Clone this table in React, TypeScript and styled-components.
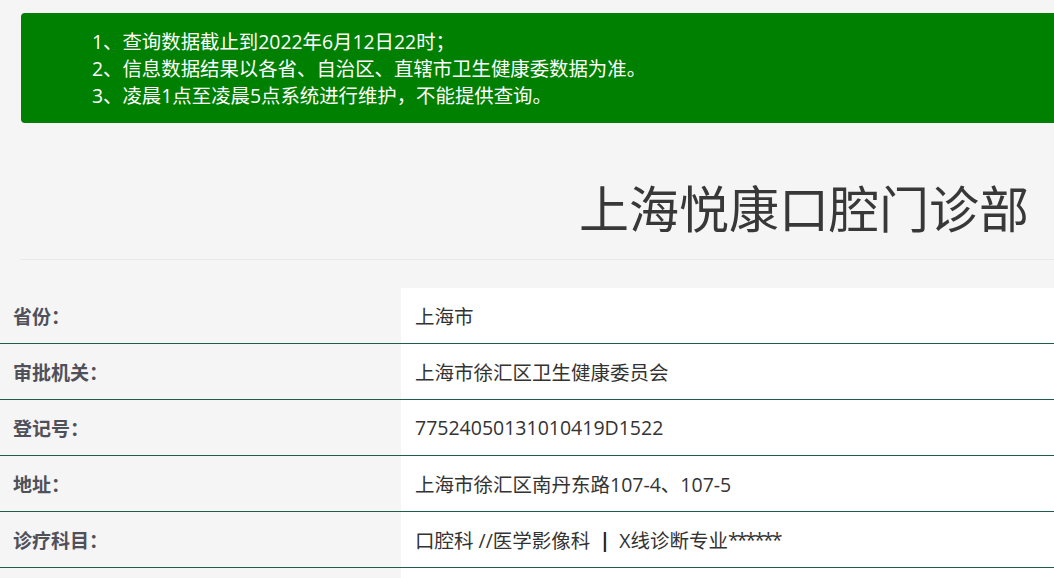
import React from "react";
import styled, { createGlobalStyle } from "styled-components";

const Global = createGlobalStyle`
  html, body {
    margin: 0;
    padding: 0;
    background: #f5f5f5;
    overflow: hidden;
  }
  body {
    font-family: "Open Sans", "Noto Sans CJK SC", sans-serif;
  }
`;

const Page = styled.div`
  background: #f5f5f5;
  padding-top: 13px;
  min-height: 578px;
`;

const Notice = styled.div`
  margin-left: 21px;
  height: 110px;
  box-sizing: border-box;
  padding: 15px 0 0 71px;
  background: #008000;
  border-radius: 4px 0 0 4px;
  color: #ffffff;
  font-size: 19.4px;
  line-height: 27px;
`;

const NoticeLine = styled.div`
  white-space: nowrap;
`;

const Title = styled.h1`
  margin: 53px 0 23px 0;
  padding-right: 25px;
  text-align: right;
  font-family: "Noto Sans CJK SC", sans-serif;
  font-weight: normal;
  font-size: 50px;
  line-height: 60px;
  color: #383838;
`;

const Divider = styled.hr`
  margin: 0 0 28px 20px;
  border: 0;
  border-top: 1px solid #e9e9e9;
  height: 0;
`;

const Table = styled.div`
  display: flex;
  flex-direction: column;
`;

const Row = styled.div`
  display: grid;
  grid-template-columns: 401px 1fr;
  height: 56px;
  box-sizing: border-box;
  border-bottom: 1px solid #1f5e44;
`;

const Label = styled.div`
  display: flex;
  align-items: center;
  padding-left: 13px;
  background: #f5f5f5;
  color: #50505a;
  font-weight: bold;
  font-size: 19px;
`;

const Value = styled.div`
  display: flex;
  align-items: center;
  padding-left: 14px;
  background: #ffffff;
  color: #333333;
  font-size: 19.5px;
  white-space: pre;
`;

const Sep = styled.span`
  font-weight: bold;
  color: #222222;
  margin: 0 4px;
`;

const Stars = styled.span`
  letter-spacing: -2px;
`;

type RowData = { label: string; value: React.ReactNode };

const rows: RowData[] = [
  { label: "省份：", value: "上海市" },
  { label: "审批机关：", value: "上海市徐汇区卫生健康委员会" },
  { label: "登记号：", value: "77524050131010419D1522" },
  { label: "地址：", value: "上海市徐汇区南丹东路107-4、107-5" },
  {
    label: "诊疗科目：",
    value: (
      <>
        口腔科 //医学影像科 <Sep>|</Sep> X线诊断专业<Stars>******</Stars>
      </>
    ),
  },
  { label: "", value: "" },
];

export default function App() {
  return (
    <>
      <Global />
      <Page>
        <Notice>
          <NoticeLine>1、查询数据截止到2022年6月12日22时；</NoticeLine>
          <NoticeLine>2、信息数据结果以各省、自治区、直辖市卫生健康委数据为准。</NoticeLine>
          <NoticeLine>3、凌晨1点至凌晨5点系统进行维护，不能提供查询。</NoticeLine>
        </Notice>
        <Title>上海悦康口腔门诊部</Title>
        <Divider />
        <Table>
          {rows.map((r, i) => (
            <Row key={i}>
              <Label>{r.label}</Label>
              <Value>{r.value}</Value>
            </Row>
          ))}
        </Table>
      </Page>
    </>
  );
}
